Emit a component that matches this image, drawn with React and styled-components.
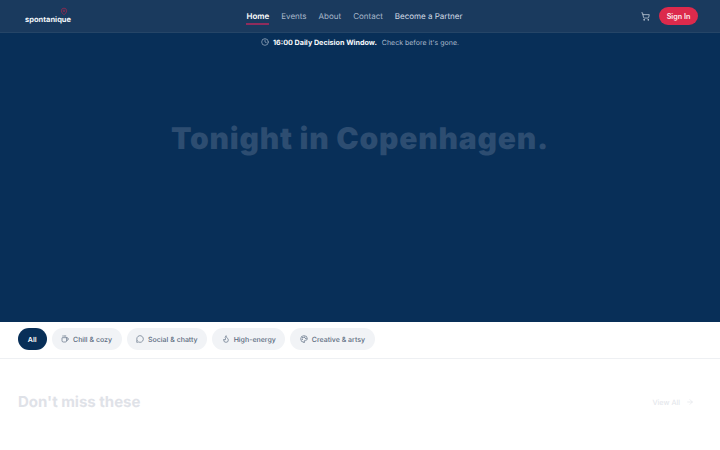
import React from 'react'
import styled, { createGlobalStyle } from 'styled-components'
import { Clock, ShoppingCart, Coffee, MessageCircle, Flame, Palette, ArrowRight } from 'lucide-react'

const GlobalStyle = createGlobalStyle`
  html, body { margin: 0; padding: 0; background: #fff; }
  body {
    font-family: Inter, "Liberation Sans", sans-serif;
    text-rendering: geometricPrecision;
    overflow: hidden;
  }
  * { box-sizing: border-box; }
`

const navItems = ['Home', 'Events', 'About', 'Contact', 'Become a Partner']

const filters = [
  { label: 'Chill & cozy', Icon: Coffee },
  { label: 'Social & chatty', Icon: MessageCircle },
  { label: 'High-energy', Icon: Flame },
  { label: 'Creative & artsy', Icon: Palette },
]

export default function App() {
  return (
    <Page>
      <GlobalStyle />
      <Hero>
        <Header>
          <Logo>
            <LogoPin viewBox="0 0 24 24" fill="none" stroke="#96294f" strokeWidth="2.4">
              <path d="M20 10c0 5-5.500 9.500-8 12-2.500-2.500-8-7-8-12a8 8 0 0 1 16 0z" />
              <circle cx="12" cy="10" r="2.500" />
            </LogoPin>
            <LogoText>spontanique</LogoText>
          </Logo>
          <Nav>
            {navItems.map((item, i) => (
              <NavLink key={item} $active={i === 0} $bright={i === 4}>{item}</NavLink>
            ))}
          </Nav>
          <Actions>
            <CartButton>
              <ShoppingCart size={9} color="#cbd5e1" strokeWidth={2} />
            </CartButton>
            <SignIn>Sign In</SignIn>
          </Actions>
        </Header>
        <Notice>
          <Clock size={8} color="#a9b9cb" strokeWidth={2} />
          <NoticeStrong>16:00 Daily Decision Window.</NoticeStrong>
          <NoticeText>Check before it's gone.</NoticeText>
        </Notice>
        <HeroBody>
          <Title>Tonight in Copenhagen.</Title>
        </HeroBody>
      </Hero>
      <FilterBar>
        <AllChip>All</AllChip>
        {filters.map(({ label, Icon }) => (
          <Chip key={label}>
            <Icon size={8} strokeWidth={2} />
            {label}
          </Chip>
        ))}
      </FilterBar>
      <Section>
        <SectionTitle>Don't miss these</SectionTitle>
        <ViewAll>
          View All
          <ArrowRight size={8} strokeWidth={2} />
        </ViewAll>
      </Section>
    </Page>
  )
}

const Page = styled.div`
  width: 720px;
  height: 450px;
  overflow: hidden;
  display: flex;
  flex-direction: column;
`

const Hero = styled.div`
  height: 322px;
  background: #082f58;
  display: flex;
  flex-direction: column;
`

const Header = styled.header`
  height: 33px;
  flex-shrink: 0;
  background: #1a3a5e;
  border-bottom: 1px solid #254567;
  display: flex;
  justify-content: space-between;
  align-items: center;
  padding: 0 22px 0 25px;
`

const Logo = styled.div`
  display: flex;
  flex-direction: column;
  align-items: flex-end;
  width: 46px;
  margin-top: -1px;
`

const LogoPin = styled.svg`
  width: 8px;
  height: 9px;
  margin: 0 3px -1px 0;
`

const LogoText = styled.span`
  font-family: Inter, sans-serif;
  font-weight: 700;
  font-size: 7.500px;
  line-height: 10px;
  color: #f1f5f9;
`

const Nav = styled.nav`
  display: flex;
  align-items: flex-start;
  gap: 12px;
`

const NavLink = styled.a`
  font-size: 8px;
  line-height: 12px;
  height: 15px;
  margin-top: 3px;
  font-weight: ${p => (p.$active ? 600 : 400)};
  color: ${p => (p.$active ? '#fff' : p.$bright ? '#d3dce6' : '#a8b8ca')};
  padding-bottom: 1px;
  border-bottom: 2px solid ${p => (p.$active ? '#8f2c5c' : 'transparent')};
`

const Actions = styled.div`
  display: flex;
  align-items: center;
  gap: 6px;
`

const CartButton = styled.span`
  display: flex;
  padding: 3px;
`

const SignIn = styled.button`
  border: 0;
  height: 18px;
  width: 39px;
  padding: 0;
  border-radius: 9px;
  background: #dc2a4c;
  color: #fdeef1;
  font-family: inherit;
  font-size: 7.200px;
  font-weight: 600;
`

const Notice = styled.div`
  height: 18px;
  display: flex;
  justify-content: center;
  align-items: center;
  gap: 4px;
  font-size: 7.200px;
`

const NoticeStrong = styled.span`
  color: #f8fafc;
  font-weight: 700;
  margin-right: 1px;
`

const NoticeText = styled.span`
  color: #a9b9cb;
  font-size: 7px;
`

const HeroBody = styled.div`
  flex: 1;
  display: flex;
  justify-content: center;
  padding-top: 67px;
`

const Title = styled.h1`
  margin: 0;
  font-family: Inter, sans-serif;
  font-weight: 900;
  font-size: 30px;
  line-height: 42px;
  letter-spacing: 0.800px;
  color: #2d4d71;
`

const FilterBar = styled.div`
  height: 37px;
  flex-shrink: 0;
  display: flex;
  align-items: center;
  gap: 5px;
  padding: 0 18px 2px;
  background: #fff;
  border-bottom: 1px solid #eef0f3;
`

const AllChip = styled.div`
  height: 22px;
  width: 28.500px;
  border-radius: 11px;
  background: #082f58;
  color: #fff;
  font-size: 7px;
  font-weight: 600;
  display: flex;
  align-items: center;
  justify-content: center;
`

const Chip = styled.div`
  height: 22px;
  padding: 0 9.500px;
  border-radius: 11px;
  background: #f1f3f6;
  color: #5b6b80;
  font-size: 7px;
  font-weight: 500;
  display: flex;
  align-items: center;
  gap: 4px;
`

const Section = styled.section`
  display: flex;
  justify-content: space-between;
  align-items: center;
  padding: 32px 26px 0 18px;
`

const SectionTitle = styled.h2`
  margin: 0;
  font-size: 15px;
  line-height: 22px;
  font-weight: 700;
  color: #dfe2e8;
`

const ViewAll = styled.a`
  display: flex;
  align-items: center;
  gap: 6px;
  font-size: 7.300px;
  color: #e1e4e9;
`
